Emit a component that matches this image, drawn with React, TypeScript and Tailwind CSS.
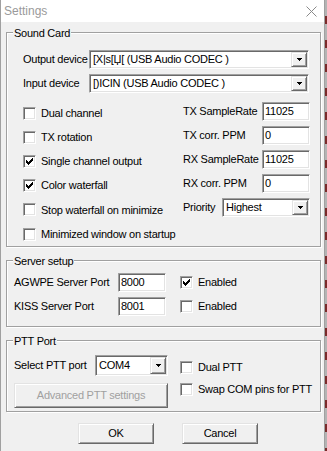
import React from 'react';

// classic win32 3d edges
const sunken =
  'border border-t-[#a0a0a0] border-l-[#a0a0a0] border-r-white border-b-white shadow-[inset_1px_1px_0_#696969,inset_-1px_-1px_0_#e3e3e3]';
const raised =
  'border border-t-[#e3e3e3] border-l-[#e3e3e3] border-r-[#696969] border-b-[#696969] shadow-[inset_1px_1px_0_#fff,inset_-1px_-1px_0_#a0a0a0]';

function CheckBox({ checked }: { checked?: boolean }) {
  return (
    <span className={`w-[13px] h-[13px] shrink-0 bg-white flex items-center justify-center ${sunken}`}>
      {checked && (
        <svg width="7" height="7" viewBox="0 0 7 7" shapeRendering="crispEdges">
          <path
            fill="#000"
            d="M6 0h1v1h-1z M5 1h2v1h-2z M0 2h1v1h-1z M4 2h3v1h-3z M0 3h2v1h-2z M3 3h3v1h-3z M0 4h5v1h-5z M1 5h3v1h-3z M2 6h1v1h-1z"
          />
        </svg>
      )}
    </span>
  );
}

function Field({ value, className = '' }: { value: string; className?: string }) {
  return (
    <div className={`h-[19px] bg-white flex items-center pl-[2px] pb-[1px] ${sunken} ${className}`}>{value}</div>
  );
}

function Combo({ value, className = '' }: { value: string; className?: string }) {
  return (
    <div className={`bg-white flex items-stretch p-[1px] ${sunken} ${className}`}>
      <span className="flex-1 flex items-center pl-[2px] whitespace-nowrap overflow-hidden">{value}</span>
      <span className={`w-[16px] bg-[#f0f0f0] flex items-center justify-center ${raised}`}>
        <svg width="5" height="3" viewBox="0 0 5 3" shapeRendering="crispEdges">
          <path fill="#000" d="M0 0h5v1h-5z M1 1h3v1h-3z M2 2h1v1h-1z" />
        </svg>
      </span>
    </div>
  );
}

function Group({ title, className = '', children }: { title: string; className?: string; children: React.ReactNode }) {
  return (
    <div
      className={`w-[315px] border border-[#a0a0a0] shadow-[1px_1px_0_#fff,inset_1px_1px_0_#fff] flex flex-col ${className}`}
    >
      <span className="-mt-[6px] ml-[6px] self-start px-[1px] h-[13px] leading-[13px] bg-[#f0f0f0]">{title}</span>
      {children}
    </div>
  );
}

function CheckRow({ label, checked }: { label: string; checked?: boolean }) {
  return (
    <div className="h-[24.2px] flex items-center gap-[5px] whitespace-nowrap">
      <CheckBox checked={checked} />
      <span>{label}</span>
    </div>
  );
}

function Button({ children, className = '', disabled }: { children: React.ReactNode; className?: string; disabled?: boolean }) {
  return (
    <button
      className={`flex items-center justify-center bg-[#f0f0f0] ${raised} ${disabled ? 'text-[#a0a0a0]' : 'text-black'} ${className}`}
    >
      {children}
    </button>
  );
}

export default function App() {
  return (
    <div className="w-[327px] h-[451px] flex overflow-hidden bg-[#f0f0f0] text-[11px] tracking-[-0.25px] text-black font-['Liberation_Sans',Arial,sans-serif]">
      <div className="w-[325px] flex flex-col border-l border-r border-[#a0a0a0]">
        {/* Title bar */}
        <div className="h-[22px] shrink-0 bg-white flex items-center justify-between pl-[3px] pr-[7px]">
          <span className="text-[12px] tracking-normal text-[#9a9a9a]">Settings</span>
          <svg width="11" height="11" viewBox="0 0 11 11">
            <path d="M0.5 0.5L10.5 10.5M10.5 0.5L0.5 10.5" stroke="#8a8a8a" strokeWidth="1" />
          </svg>
        </div>

        <div className="flex-1 flex flex-col pl-[5px]">
          {/* Sound Card */}
          <Group title="Sound Card" className="mt-[10px] h-[215px]">
            <div className="mt-[10px] ml-[16px] h-[19px] flex items-center">
              <span className="w-[66px] whitespace-nowrap">Output device</span>
              <Combo value="[X|s[Џ[ (USB Audio CODEC )" className="w-[220px] h-[19px]" />
            </div>
            <div className="mt-[5px] ml-[16px] h-[19px] flex items-center">
              <span className="w-[66px] whitespace-nowrap">Input device</span>
              <Combo value="[)ICIN (USB Audio CODEC )" className="w-[220px] h-[19px]" />
            </div>

            <div className="mt-[8px] ml-[16px] flex">
              <div className="w-[160px] flex flex-col">
                <CheckRow label="Dual channel" />
                <CheckRow label="TX rotation" />
                <CheckRow label="Single channel output" checked />
                <CheckRow label="Color waterfall" checked />
                <CheckRow label="Stop waterfall on minimize" />
                <CheckRow label="Minimized window on startup" />
              </div>
              <div className="mt-[1px] w-[127px] flex flex-col gap-[5px]">
                <div className="h-[19px] flex items-center justify-between">
                  <span className="whitespace-nowrap">TX SampleRate</span>
                  <Field value="11025" className="w-[48px]" />
                </div>
                <div className="h-[19px] flex items-center justify-between">
                  <span className="whitespace-nowrap">TX corr. PPM</span>
                  <Field value="0" className="w-[48px]" />
                </div>
                <div className="h-[19px] flex items-center justify-between">
                  <span className="whitespace-nowrap">RX SampleRate</span>
                  <Field value="11025" className="w-[48px]" />
                </div>
                <div className="h-[19px] flex items-center justify-between">
                  <span className="whitespace-nowrap">RX corr. PPM</span>
                  <Field value="0" className="w-[48px]" />
                </div>
                <div className="h-[19px] flex items-center justify-between">
                  <span>Priority</span>
                  <Combo value="Highest" className="w-[88px] h-[19px]" />
                </div>
              </div>
            </div>
          </Group>

          {/* Server setup */}
          <Group title="Server setup" className="mt-[13px] h-[67px]">
            <div className="mt-[5px] ml-[7px] h-[19px] flex items-center">
              <span className="w-[104px] whitespace-nowrap">AGWPE Server Port</span>
              <Field value="8000" className="w-[48px]" />
              <span className="ml-[14px] flex items-center gap-[5px]">
                <CheckBox checked />
                <span>Enabled</span>
              </span>
            </div>
            <div className="mt-[5px] ml-[7px] h-[19px] flex items-center">
              <span className="w-[104px] whitespace-nowrap">KISS Server Port</span>
              <Field value="8001" className="w-[48px]" />
              <span className="ml-[14px] flex items-center gap-[5px]">
                <CheckBox />
                <span>Enabled</span>
              </span>
            </div>
          </Group>

          {/* PTT Port */}
          <Group title="PTT Port" className="mt-[13px] h-[72px]">
            <div className="mt-[7px] ml-[7px] flex">
              <div className="w-[154px] flex flex-col">
                <div className="h-[21px] flex items-center">
                  <span className="w-[81px] whitespace-nowrap">Select PTT port</span>
                  <Combo value="COM4" className="w-[73px] h-[21px]" />
                </div>
                <Button disabled className="mt-[7px] h-[25px] w-[154px]">
                  Advanced PTT settings
                </Button>
              </div>
              <div className="ml-[12px] mt-[6px] flex flex-col gap-[9px]">
                <div className="h-[13px] flex items-center gap-[5px] whitespace-nowrap">
                  <CheckBox />
                  <span>Dual PTT</span>
                </div>
                <div className="h-[13px] flex items-center gap-[5px] whitespace-nowrap">
                  <CheckBox />
                  <span>Swap COM pins for PTT</span>
                </div>
              </div>
            </div>
          </Group>

          <div className="mt-[11px] ml-[72px] flex gap-[28px]">
            <Button className="w-[76px] h-[21px]">OK</Button>
            <Button className="w-[76px] h-[21px]">Cancel</Button>
          </div>
        </div>
      </div>
      <div className="w-[2px] h-full bg-[repeating-linear-gradient(to_bottom,#b4b4b4_0px,#b4b4b4_16px,#7a2a2a_16px,#7a2a2a_24px)]" />
    </div>
  );
}
